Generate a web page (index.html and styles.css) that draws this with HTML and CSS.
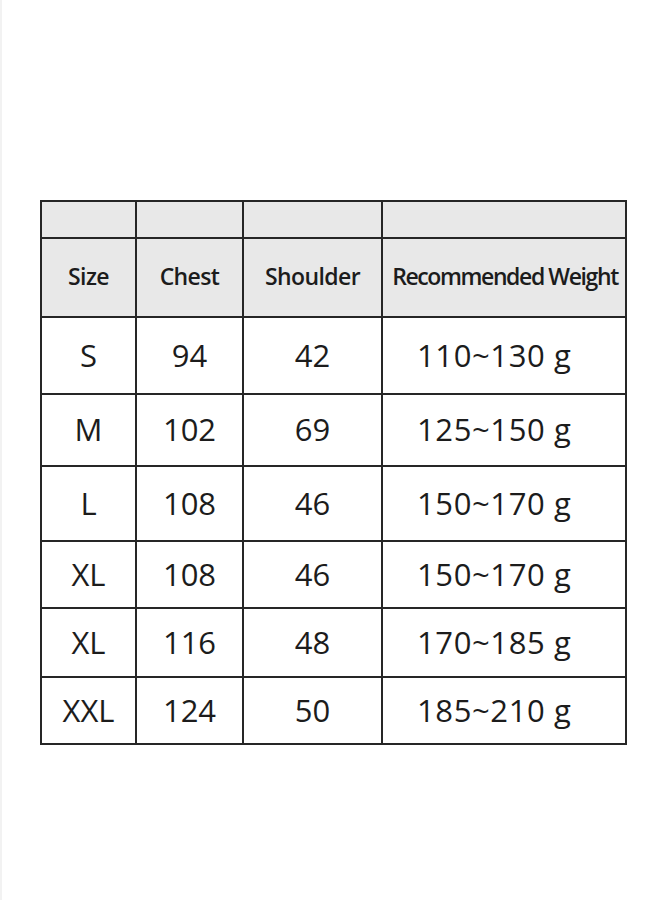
FILE: index.html
```html
<!DOCTYPE html>
<html lang="en">
<head>
<meta charset="utf-8">
<title>Size Chart</title>
<link rel="stylesheet" href="styles.css">
</head>
<body>
<main class="page">
  <div class="chart">
    <div class="cell head blank"></div>
    <div class="cell head blank"></div>
    <div class="cell head blank"></div>
    <div class="cell head blank"></div>

    <div class="cell head">Size</div>
    <div class="cell head">Chest</div>
    <div class="cell head">Shoulder</div>
    <div class="cell head head-wide">Recommended Weight</div>

    <div class="cell">S</div>
    <div class="cell">94</div>
    <div class="cell">42</div>
    <div class="cell weight">110~130 g</div>

    <div class="cell">M</div>
    <div class="cell">102</div>
    <div class="cell">69</div>
    <div class="cell weight">125~150 g</div>

    <div class="cell">L</div>
    <div class="cell">108</div>
    <div class="cell">46</div>
    <div class="cell weight">150~170 g</div>

    <div class="cell">XL</div>
    <div class="cell">108</div>
    <div class="cell">46</div>
    <div class="cell weight">150~170 g</div>

    <div class="cell">XL</div>
    <div class="cell">116</div>
    <div class="cell">48</div>
    <div class="cell weight">170~185 g</div>

    <div class="cell">XXL</div>
    <div class="cell">124</div>
    <div class="cell">50</div>
    <div class="cell weight">185~210 g</div>
  </div>
</main>
</body>
</html>
```
FILE: styles.css
```css
html, body {
  margin: 0;
  padding: 0;
  background: #ffffff;
}

.page {
  width: 660px;
  height: 900px;
  box-sizing: border-box;
  padding: 200px 0 0 40px;
  border-left: 2px solid #f2f2f2;
}

.chart {
  display: grid;
  grid-template-columns: 93px 105px 137px 242px;
  grid-template-rows: 35px 77px 75px 70px 73px 65px 67px 65px;
  gap: 2px;
  padding: 2px;
  width: max-content;
  margin-left: -2px;
  background: #262626;
}

.cell {
  background: #ffffff;
  display: flex;
  align-items: center;
  justify-content: center;
  font-family: "Open Sans", "Noto Sans", sans-serif;
  font-size: 31px;
  font-weight: 400;
  color: #1c1c1c;
  white-space: nowrap;
  padding-bottom: 2px;
  box-sizing: border-box;
}

.head {
  background: #e8e8e8;
  font-size: 23px;
  font-weight: 600;
  letter-spacing: -0.6px;
  padding-bottom: 4px;
}

.head-wide {
  letter-spacing: -1.4px;
  padding-left: 2px;
}

.weight {
  justify-content: flex-start;
  padding-left: 34px;
  letter-spacing: 0.6px;
}
```
